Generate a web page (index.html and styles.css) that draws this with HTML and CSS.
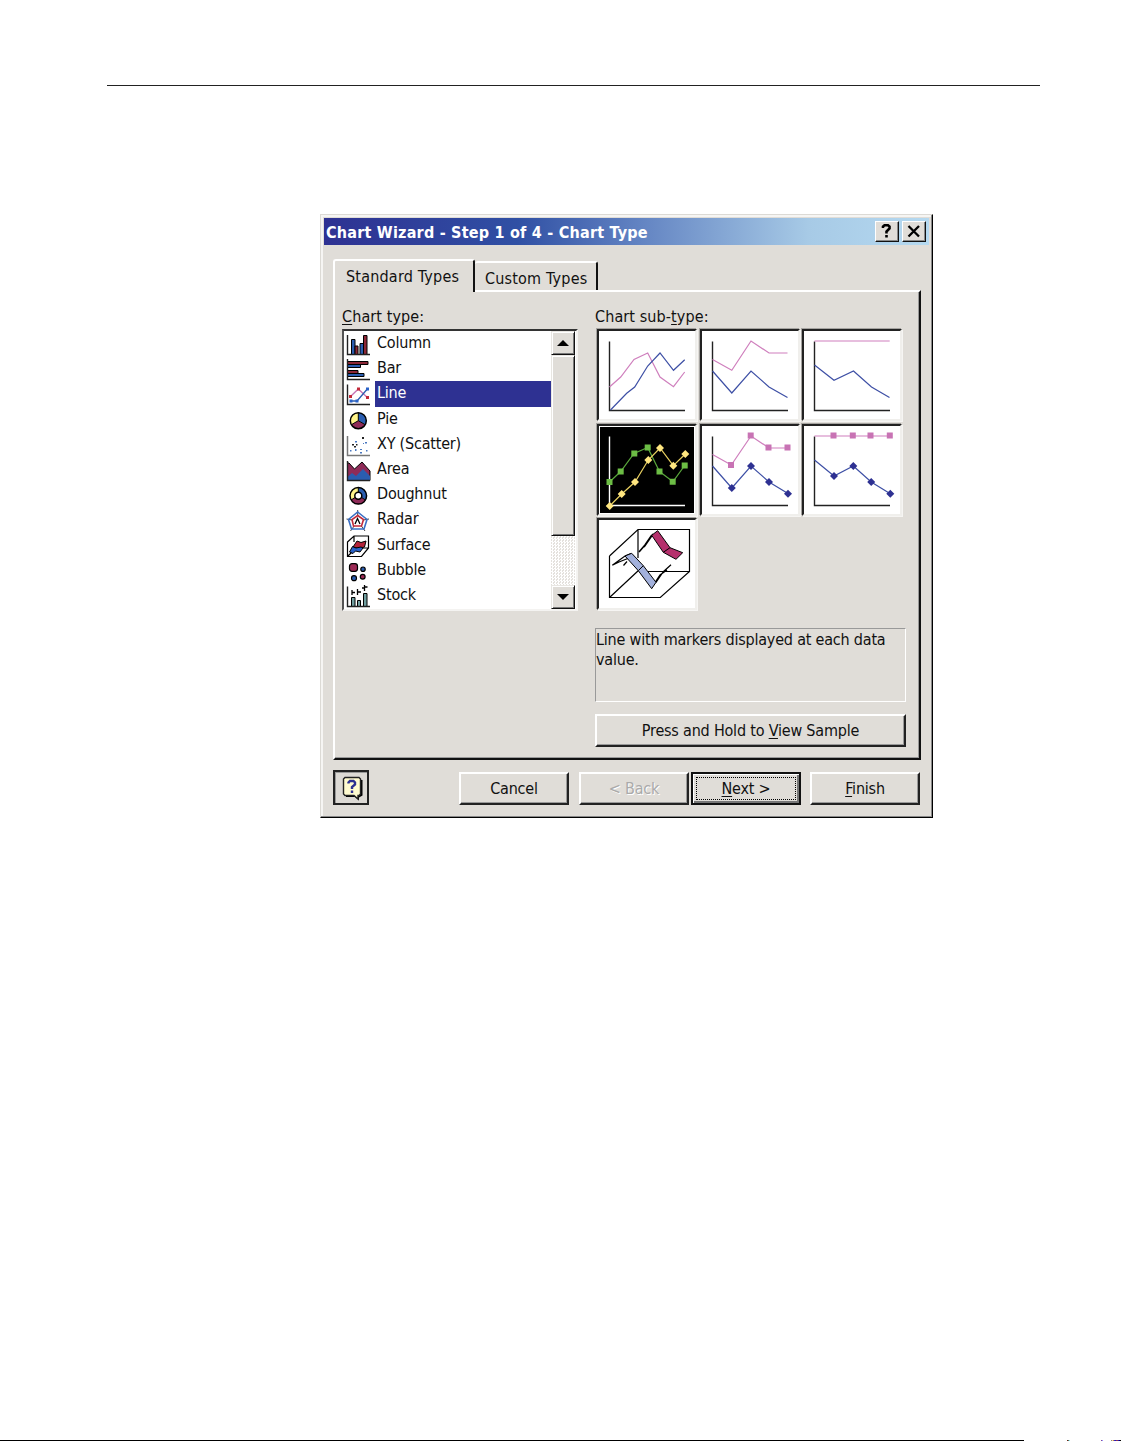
FILE: index.html
```html
<!DOCTYPE html>
<html lang="en">
<head>
    <meta charset="UTF-8">
    <title>Chart Wizard</title>
    <link rel="stylesheet" href="styles.css">
</head>
<body>
    <hr class="page-rule">

    <div class="dialog">
        <div class="titlebar">
            <span class="title">Chart Wizard - Step 1 of 4 - Chart Type</span>
            <button class="caption-btn">
                <svg width="21" height="17" viewBox="0 0 20 17"><path d="M6.500 5V3.500L8 2.200H11.500L13 3.500V5.500L10 8.500V10.500M10 12V14.500" fill="none" stroke="#000" stroke-width="2.600"/></svg>
            </button>
            <button class="caption-btn">
                <svg width="21" height="17" viewBox="0 0 20 17"><path d="M5 3L15.500 13.500M15.500 3L5 13.500" stroke="#000" stroke-width="2.300"/></svg>
            </button>
        </div>

        <div class="tabs">
            <div class="tab active">Standard Types</div>
            <div class="tab">Custom Types</div>
        </div>

        <div class="panel">
            <div class="left-col">
                <div class="label"><u>C</u>hart type:</div>
                <div class="listbox">
                    <ul class="types">
                        <li><svg viewBox="0 0 25 25"><g stroke="#000"><path fill="#2a5db0" d="M5.500 8.500h3.500v15h-3.500zM14 12.500h3.500v11h-3.500z"/><path fill="#8c2736" d="M9 15h3v8.500h-3zM17.500 4.500h3.500v19h-3.500z"/></g><path class="axis" d="M1.500 4V23.500H24"/></svg><span>Column</span></li>
                        <li><svg viewBox="0 0 25 25"><g stroke="#000"><path fill="#8c2736" d="M1.500 5.500h20.500v3h-20.500zM1.500 14.500h10.500v3h-10.500z"/><path fill="#2a5db0" d="M1.500 8.500h13v3h-13zM1.500 17.500h16.500v3h-16.500z"/></g><path class="axis" d="M1.500 3V23.500H24"/></svg><span>Bar</span></li>
                        <li class="selected"><svg viewBox="0 0 25 25"><path d="M4.500 15.500L12.300 8L21.300 16.500" fill="none" stroke="#c873b4" stroke-width="1.300"/><path d="M5 20H11L21.300 8" fill="none" stroke="#2a5db0" stroke-width="1.300"/><path fill="#c22a3a" d="M3 14h3v3h-3zM11 6.500h3v3h-3zM20 15h3v3h-3z"/><path fill="#2a62c8" d="M3.500 18.500h3v3h-3zM9.500 18.500h3v3h-3zM20 6.500h3v3h-3z"/><path class="axis" d="M1.500 3.500V23.500H24"/></svg><span>Line</span></li>
                        <li><svg viewBox="0 0 25 25"><circle cx="12.300" cy="13.700" r="8" fill="#fff48a"/><path d="M12.300 13.700V5.700A8 8 0 0 1 19.200 17.700Z" fill="#2a5db0"/><path d="M12.300 13.700L19.200 17.700A8 8 0 0 1 5.400 17.700Z" fill="#8f2b58"/><path d="M12.300 5.700V13.700L19.200 17.700M12.300 13.700L5.400 17.700" fill="none" stroke="#000"/><circle cx="12.300" cy="13.700" r="8" fill="none" stroke="#000" stroke-width="1.500"/></svg><span>Pie</span></li>
                        <li><svg viewBox="0 0 25 25"><path fill="#222" d="M16 5h2v2h-2zM6 12h2v1.500h-2zM8 14h2v1.500h-2zM10 12h1.500v1.500h-1.500z"/><path fill="#4a78c0" d="M9 9h2v1.500h-2zM19 10h2v1.500h-2zM4 18h1.500v1.500h-1.500zM9 17h1.500v2h-1.500zM14 20h2v1.500h-2zM20 18h1.500v1.500h-1.500zM14 17h2v1h-2zM17 11h1v1h-1z"/><path d="M1.500 4V23.500H24" fill="none" stroke="#777" stroke-width="1.500"/></svg><span>XY (Scatter)</span></li>
                        <li><svg viewBox="0 0 25 25"><path fill="#8f2b58" stroke="#000" d="M1.500 6H3L8.500 12L16 5L24 14V23.500H1.500Z"/><path fill="#2a5db0" d="M1.500 20L6 16L10 19L17 12L24 19V23.500H1.500Z"/><path class="axis" d="M1.500 4V23.500H24"/></svg><span>Area</span></li>
                        <li><svg viewBox="0 0 25 25"><g fill="none"><circle cx="12.300" cy="13.800" r="6" stroke="#fff48a" stroke-width="5"/><path d="M12.300 7.800A6 6 0 0 1 17.500 16.800" stroke="#2a5db0" stroke-width="5"/><path d="M17.500 16.800A6 6 0 0 1 7.100 16.800" stroke="#8f2b58" stroke-width="5"/><circle cx="12.300" cy="13.800" r="8.300" stroke="#000" stroke-width="1.500"/><circle cx="12.300" cy="13.800" r="3.500" stroke="#000" stroke-width="1.500"/><path d="M12.300 5.500v5M19.500 18l-4-2.500M5 18l4-2.500" stroke="#000"/></g></svg><span>Doughnut</span></li>
                        <li><svg viewBox="0 0 25 25"><g fill="none"><path d="M11.700 3V14L23 12M11.700 14L19 24M11.700 14L4.500 24M11.700 14L0.500 12" stroke="#444"/><path d="M11.700 5L21 12.500L18 22H5.500L2.500 12.500Z" stroke="#3a6fc4" stroke-width="1.600"/><path d="M11.700 8.500L17.500 12.500L15.500 19H7.500L6 12.500Z" fill="#fff" stroke="#c22a3a" stroke-width="1.600"/><path d="M9 17L11.500 11.500L14 17" stroke="#000" stroke-width="1.300"/></g></svg><span>Radar</span></li>
                        <li><svg viewBox="0 0 25 25"><path fill="none" stroke="#000" stroke-width="1.200" d="M1.500 9L8 3H22.500V15L15.500 23.500H1.500ZM8 3V9M1.500 23.500L7 18M15 15H22.500"/><path fill="#b3243a" stroke="#000" d="M7 14L11 8L15 9.500L20 8L18.500 14L13 15.500Z"/><path fill="#2a62c8" stroke="#000" d="M3.500 19L6.500 13.500L10 15L15 14L17 15L14 19L9.500 18L7 20.500Z"/></svg><span>Surface</span></li>
                        <li><svg viewBox="0 0 25 25"><g stroke="#000" stroke-width="1.200"><rect x="3.500" y="5.700" width="8" height="7.600" rx="2.500" fill="#9c2a55"/><circle cx="17" cy="11.200" r="2.200" fill="#2a5db0"/><circle cx="8" cy="20.200" r="2.500" fill="#2a5db0"/><circle cx="16.700" cy="18.800" r="2.400" fill="#9c2a55"/></g></svg><span>Bubble</span></li>
                        <li><svg viewBox="0 0 25 25"><path fill="#6f9d9e" stroke="#000" d="M5.500 14.500h3.500v9h-3.500zM11.500 17.500h3v6h-3zM17.500 10.500h3.500v13h-3.500z"/><path d="M6 7v5M6 9.500h3M11.500 6v6M11.500 9h3.500M18.500 2v6M16 5h2.500M18.500 4h3" fill="none" stroke="#000" stroke-width="1.300"/><path class="axis" d="M1.500 3.500V23.500H24"/></svg><span>Stock</span></li>
                    </ul>
                    <div class="scrollbar">
                        <div class="scroll-btn"><svg width="12" height="6" viewBox="0 0 12 6"><path d="M6 0L12 6H0Z"/></svg></div>
                        <div class="thumb"></div>
                        <div class="track"></div>
                        <div class="scroll-btn"><svg width="12" height="6" viewBox="0 0 12 6"><path d="M0 0H12L6 6Z"/></svg></div>
                    </div>
                </div>
            </div>

            <div class="right-col">
                <div class="label">Chart sub-<u>t</u>ype:</div>
                <div class="subtypes">
                    <div class="cell">
                        <svg viewBox="0 0 96 88">
                            <path class="axis" d="M10.500 10.500V79.500H86"/>
                            <polyline class="pink" points="10.500,56 21.700,46 35,28.500 48.700,22 61,46 74.500,55.700 85.700,41"/>
                            <polyline class="blue" points="11.500,79 27.700,62.300 35.700,56 48.700,35 61,22 74.500,39.300 85.700,28.700"/>
                        </svg>
                    </div>
                    <div class="cell">
                        <svg viewBox="0 0 96 88">
                            <path class="axis" d="M10.500 10.500V79.500H86"/>
                            <polyline class="pink" points="10.500,28.500 29.800,39.300 49,10 67,22 85.500,22"/>
                            <polyline class="blue" points="10.500,40 29.800,62 49,40 67,56 85.500,66.500"/>
                        </svg>
                    </div>
                    <div class="cell">
                        <svg viewBox="0 0 96 88">
                            <path class="axis" d="M10.500 10.500V79.500H86"/>
                            <polyline class="pink" points="10.500,10 85.700,10"/>
                            <polyline class="blue" points="10.500,34 30,49.300 49.500,40 67.500,56 85.500,66.500"/>
                        </svg>
                    </div>
                    <div class="cell chosen">
                        <svg viewBox="0 0 96 88">
                            <path class="axis" d="M10.500 10.500V79.500H86"/>
                            <polyline class="green" points="10.500,56 21.700,45.500 35,27.500 48.700,21.500 60.500,45.500 74,55.700 85.700,39.500"/>
                            <path class="green-mark" d="M7.500 53h6v6h-6zM18.700 42.500h6v6h-6zM32.300 24.500h6v6h-6zM45.700 18.500h6v6h-6zM57.500 42.500h6v6h-6zM70.700 52.700h6v6h-6zM82.700 36.500h6v6h-6z"/>
                            <polyline class="yellow" points="10.700,80 22.700,68 36,56 49.300,34 61,22 74.300,39.700 86.300,28"/>
                            <path class="yellow-mark" d="M10.700 76l4 4l-4 4l-4-4zM22.700 64l4 4l-4 4l-4-4zM36 52l4 4l-4 4l-4-4zM49.300 30l4 4l-4 4l-4-4zM61 18l4 4l-4 4l-4-4zM74.300 35.700l4 4l-4 4l-4-4zM86.300 24l4 4l-4 4l-4-4z"/>
                        </svg>
                    </div>
                    <div class="cell">
                        <svg viewBox="0 0 96 88">
                            <path class="axis" d="M10.500 10.500V79.500H86"/>
                            <polyline class="pink" points="10.500,28.500 29.300,39 49,10 67,22 85.500,22"/>
                            <path class="pink-mark" d="M26 36h6v6h-6zM45.700 6.500h6v6h-6zM63.500 18.500h6v6h-6zM82.500 18.500h6v6h-6z"/>
                            <polyline class="blue" points="10.500,40 29.800,62 49,40 67,56 86,67.500"/>
                            <path class="blue-mark" d="M29.800 58l4 4l-4 4l-4-4zM49 36l4 4l-4 4l-4-4zM67 52l4 4l-4 4l-4-4zM86 63.700l4 4l-4 4l-4-4z"/>
                        </svg>
                    </div>
                    <div class="cell">
                        <svg viewBox="0 0 96 88">
                            <path class="axis" d="M10.500 10.500V79.500H86"/>
                            <polyline class="pink" points="10.500,10 85.700,10"/>
                            <path class="pink-mark" d="M26.500 6.500h6v6h-6zM45.800 6.500h6v6h-6zM63.500 6.500h6v6h-6zM82.800 6.500h6v6h-6z"/>
                            <polyline class="blue" points="10.500,34 30,50 49.300,40 67.200,56 86.300,67.700"/>
                            <path class="blue-mark" d="M30 46l4 4l-4 4l-4-4zM49.300 36l4 4l-4 4l-4-4zM67.200 52l4 4l-4 4l-4-4zM86.300 63.700l4 4l-4 4l-4-4z"/>
                        </svg>
                    </div>
                    <div class="cell">
                        <svg viewBox="0 0 96 88">
                            <g fill="none" stroke="#000" stroke-width="1.200">
                                <path d="M10.500 36V77.500H61.300L90.500 51.500V9.500H39L10.500 36M39 9.500V38M49 51.500H90.500M10.500 77.500L40 50"/>
                                <path d="M40 32L46 25L52.700 15.300M45 27L54 14" stroke-width="1.600"/>
                                <path d="M13.300 45.300L26 36L32 33.500M13.300 45.300L20 42L30 38M24.500 45.500L28 41.500"/>
                                <path d="M57 62.300L64.300 51.700L72 44.700M55 64L61 55L68 50"/>
                            </g>
                            <path fill="#b5306c" stroke="#000" d="M52.700 15.300L58.700 10.700L71 27.700L83.700 32.700L77 39.300L64.300 32.300ZM64.300 32.300L71 27.700"/>
                            <path fill="#a3b1dc" stroke="#000" d="M26 36L32.700 33.300L44.300 45.700L57 62.300L52.700 68.700L39.300 50.700ZM39.300 50.700L44.300 45.700"/>
                        </svg>
                    </div>
                </div>
                <div class="description">Line with markers displayed at each data value.</div>
                <button class="btn sample">Press and Hold to <u>V</u>iew Sample</button>
            </div>
        </div>

        <div class="footer">
            <button class="help">
                <svg width="24" height="26" viewBox="0 0 24 26">
                    <path d="M5 4L21.500 5V20.500L18 22.500V25.500L14 22H5Z" fill="#000"/>
                    <path d="M4 2.500H18L19.500 4V19L18 20.500H17V24L13 20.500H4L2.500 19V4Z" fill="#fffbd0" stroke="#222" stroke-width="1.400"/>
                    <path d="M7.500 8.500V7.500L9 6H12.500L14 7.500V9.500L11 12V14M11 15.500V18" fill="none" stroke="#2e3192" stroke-width="2.400"/>
                </svg>
            </button>
            <button class="btn cancel">Cancel</button>
            <button class="btn back" disabled>&lt; Back</button>
            <button class="btn next"><span><u>N</u>ext &gt;</span></button>
            <button class="btn finish"><u>F</u>inish</button>
        </div>
    </div>

    <div class="page-end"></div>
</body>
</html>
```
FILE: styles.css
```css
* {
    box-sizing: border-box;
}
body {
    margin: 0;
    height: 1441px;
    display: flex;
    flex-direction: column;
    background-color: #fff;
    color: #111;
    font-family: "DejaVu Sans Condensed", "DejaVu Sans", sans-serif;
    font-size: 16px;
    letter-spacing: -0.2px;
}
button {
    font: inherit;
    letter-spacing: inherit;
    color: inherit;
    padding: 0;
}
svg {
    display: block;
    flex: none;
}
u {
    text-underline-offset: 2px;
    text-decoration-thickness: 1px;
    text-decoration-skip-ink: none;
}
.page-rule {
    width: 933px;
    height: 1px;
    margin: 85px 0 128px 107px;
    border: none;
    background-color: #222;
}
.page-end {
    height: 1px;
    margin-top: auto;
    background: linear-gradient(to right, #000 1024px, #fff 1024px, #fff 1067px, #721 1067px, #721 1068px, #2cc 1069px, #fff 1070px, #fff 1101px, #e72 1101px, #22f 1102px, #fff 1103px, #fff 1111px, #220 1111px, #fff 1112px, #ea2 1113px, #00e 1115px, #a42 1117px, #00d 1119px, #000 1120px);
}

/* Dialog window */
.dialog {
    width: 613px;
    height: 604px;
    margin-left: 320px;
    padding: 3px;
    background-color: #e0ddd8;
    border: 1px solid #000;
    border-top-color: #dcdad5;
    border-left-color: #dcdad5;
    box-shadow: inset -1px -1px #888, inset 2px 2px #f6f5f3;
}
.titlebar {
    display: flex;
    align-items: center;
    width: 605px;
    height: 27px;
    padding: 0 3px 0 2px;
    background: linear-gradient(to right, #2e3192, #3050a4 32%, #6283c2 52%, #a7cae6 80%, #b5d9f0);
}
.title {
    flex: 1;
    padding-top: 1px;
    color: #fff;
    font-weight: bold;
    letter-spacing: 0.22px;
    white-space: nowrap;
}
.caption-btn {
    width: 24px;
    height: 21px;
    margin-left: 3px;
    background-color: #e0ddd8;
    border: 1px solid;
    border-color: #fff #111 #111 #fff;
    box-shadow: inset -1px -1px #888;
}

/* Tabs */
.tabs {
    display: flex;
    align-items: flex-end;
    height: 45px;
    padding-left: 9px;
    letter-spacing: 0.2px;
}
.tab {
    width: 123px;
    height: 29px;
    padding-left: 10px;
    line-height: 31px;
    white-space: nowrap;
    border-top: 2px solid #fff;
    border-right: 2px solid #111;
    border-radius: 3px 3px 0 0;
}
.tab.active {
    position: relative;
    z-index: 1;
    width: 142px;
    height: 33px;
    margin-bottom: -2px;
    padding-left: 11px;
    background-color: #e0ddd8;
    border-left: 2px solid #fff;
}
.panel {
    display: flex;
    width: 588px;
    height: 470px;
    margin-left: 9px;
    padding: 16px 0 0 7px;
    border: 2px solid;
    border-color: #fff #111 #111 #fff;
    box-shadow: inset -1px -1px #999;
}
.label {
    height: 21px;
    line-height: 18px;
    letter-spacing: 0.1px;
    white-space: nowrap;
}
.left-col {
    width: 253px;
}

/* Chart type list */
.listbox {
    display: flex;
    width: 236px;
    height: 282px;
    padding-right: 1px;
    border: 2px solid;
    border-color: #333 #f4f3f1 #f4f3f1 #555;
    background-color: #fff;
}
.types {
    flex: 1;
    margin: 0;
    padding: 0 0 0 2px;
    list-style: none;
}
.types li {
    display: flex;
    height: 25.2px;
}
.types svg {
    width: 25px;
    height: 25px;
}
.types span {
    flex: 1;
    margin-left: 4px;
    padding-left: 2px;
    line-height: 23px;
    white-space: nowrap;
}
.types .selected span {
    background-color: #2e3192;
    color: #fff;
}
.axis {
    fill: none;
    stroke: #222;
    stroke-width: 1.4;
}
.scrollbar {
    display: flex;
    flex-direction: column;
    width: 24px;
}
.scroll-btn,
.thumb {
    background-color: #e0ddd8;
    border: 1px solid;
    border-color: #e8e6e2 #111 #111 #e8e6e2;
    box-shadow: inset 1px 1px #fff, inset -1px -1px #777;
}
.scroll-btn {
    display: flex;
    align-items: center;
    justify-content: center;
    height: 24px;
}
.thumb {
    height: 181px;
}
.track {
    flex: 1;
    background: repeating-conic-gradient(#fff 0 25%, #e4e1dd 0 50%) 0 0 / 3px 3px;
}

/* Sub-type previews */
.subtypes {
    display: grid;
    grid-template-columns: repeat(3, 100px);
    grid-auto-rows: 92px;
    gap: 2.5px;
    margin-left: 2px;
}
.cell {
    background-color: #fff;
    border: 2px solid;
    border-color: #222 #f0efec #f0efec #222;
    box-shadow: -1px -1px #a5a3a0, 1px 1px #f6f5f3;
}
.cell svg {
    width: 96px;
    height: 88px;
}
.cell.chosen svg {
    background-color: #000;
    outline: 1px solid #fff;
    outline-offset: -1px;
}
.chosen .axis {
    stroke: #fff;
}
.pink,
.blue,
.green,
.yellow {
    fill: none;
    stroke-width: 1.2;
}
.pink {
    stroke: #cf7fbd;
}
.blue {
    stroke: #3d4fa5;
}
.green {
    stroke: #5aa83c;
}
.yellow {
    stroke: #e8d060;
}
.pink-mark {
    fill: #c873b4;
}
.blue-mark {
    fill: #2e3192;
}
.green-mark {
    fill: #6cbd45;
}
.yellow-mark {
    fill: #ffe680;
}
.description {
    width: 311px;
    height: 74px;
    margin: 18px 0 12px;
    padding-top: 1px;
    line-height: 20px;
    border: 1px solid;
    border-color: #999 #fff #fff #999;
}

/* Buttons */
.btn {
    width: 110px;
    height: 33px;
    background-color: #e0ddd8;
    border: 2px solid;
    border-color: #fff #222 #222 #fff;
    box-shadow: inset -1px -1px #999;
}
.btn.sample {
    width: 311px;
}
.footer {
    display: flex;
    align-items: flex-end;
    height: 45px;
    padding-left: 9px;
}
.help {
    display: flex;
    align-items: center;
    justify-content: center;
    width: 36px;
    height: 35px;
    padding-left: 4px;
    background-color: #dcd9d4;
    border: 2px solid #222;
    box-shadow: inset 1px 1px #999;
}
.cancel {
    margin-left: 90px;
}
.back {
    margin-left: 10px;
    color: #aaa;
    text-shadow: 1px 1px #fff;
}
.next {
    margin-left: 2px;
    padding: 3px;
    border-color: #111;
    box-shadow: inset 1px 1px #fff, inset -2px -2px #777;
}
.next span {
    display: block;
    height: 23px;
    line-height: 21px;
    border: 1px dotted #000;
}
.finish {
    margin-left: 9px;
}
```
